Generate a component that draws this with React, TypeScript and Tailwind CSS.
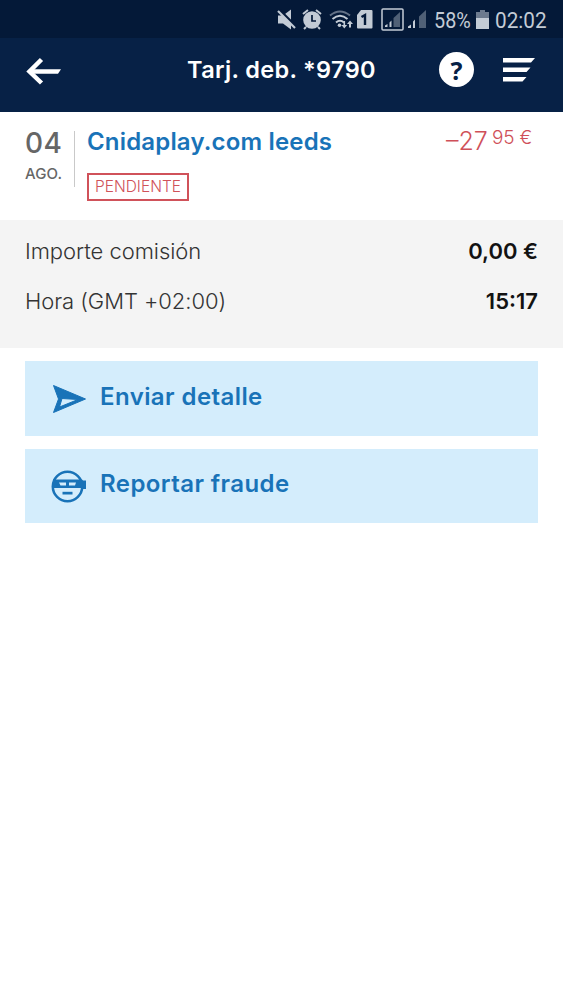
import type { ReactNode } from 'react'

function StatusBar() {
  return (
    <div className="h-[38px] bg-[#041938] pl-[277px] flex items-center text-[#c3cbd5]">
      <svg width="153" height="38" viewBox="277 0 153 38" fill="currentColor" className="shrink-0">
        {/* mute */}
        <path d="M278 15.500h5l8-6v20l-8-6h-5z" />
        <path d="M279.500 10l16 16" stroke="#041938" strokeWidth="2.500" />
        <path d="M278 11l17 17" stroke="currentColor" strokeWidth="2.200" />
        {/* alarm */}
        <circle cx="312" cy="20" r="8.800" />
        <path d="M303 14l5-4M321 14l-5-4M306 27l-2 2M318 27l2 2" stroke="currentColor" strokeWidth="2" />
        <path d="M312 15v6h4" fill="none" stroke="#041938" strokeWidth="1.700" />
        {/* wifi */}
        <g fill="none" stroke="currentColor" strokeWidth="2">
          <path d="M330 15.500q10-8 20 0" opacity=".5" />
          <path d="M332.500 19q7.500-6.500 15 0M336 22.500q4-3.500 8 0" />
        </g>
        <circle cx="339.500" cy="25.200" r="1.800" />
        <path d="M343.500 21v4h-2l2.800 3.500 2.800-3.500h-2v-4zM349 27.500v-3.500h-2l3-3.500 3 3.500h-2v3.500z" />
        {/* sim */}
        <path d="M357 15l4-5h10.500q1 0 1 1v16.500q0 1-1 1H358q-1 0-1-1z" />
        <path d="M361.500 17l3.500-2v10" fill="none" stroke="#041938" strokeWidth="2.400" />
        {/* signal */}
        <rect x="382" y="9" width="21" height="21" rx="1" fill="none" stroke="currentColor" strokeWidth="1.500" />
        <path d="M385 27v-1.500l2.500-1.500v3zM389.500 27v-4.500l2-2v6.500z" />
        <path d="M393.500 27v-9l6.500-6v15z" opacity=".4" />
        <path d="M408 28v-1.500l3-2V28zM413 28v-6.500l2-2V28z" />
        <path d="M419 28V16.500l7-6.500v18z" opacity=".4" />
      </svg>
      <span className="w-[42px] ml-1 mt-[3px] font-['Roboto'] text-[22.500px] leading-none whitespace-nowrap origin-left scale-x-[.88]">58%</span>
      <svg width="13" height="20" viewBox="0 0 13 20" fill="currentColor" className="mt-[2px] shrink-0">
        <path d="M4 0h5v2h4v7H0V2h4z" opacity=".55" />
        <path d="M0 8h13v11H0z" />
      </svg>
      <span className="ml-[6px] mt-[3px] font-['Roboto'] text-[22.500px] leading-none whitespace-nowrap origin-left scale-x-[.92]">02:02</span>
    </div>
  )
}

function Header() {
  return (
    <header className="h-[74px] pt-[2px] bg-[#072146] text-white flex">
      <svg width="36" height="28" viewBox="0 0 36 28" className="ml-[26px] mt-[17px]">
        <path d="M15.500 2.500L3.500 14.500L15.500 26" fill="none" stroke="white" strokeWidth="4.500" />
        <path d="M3 12.300h32l-3 4.400H3z" fill="white" />
      </svg>
      <h1 className="w-[188px] ml-[125px] mt-[14px] text-[23.500px] leading-8 font-semibold tracking-[.35px] whitespace-nowrap">Tarj. deb. *9790</h1>
      <span className="size-[35px] ml-[64px] mt-3 rounded-full bg-white text-[#072146] font-['Noto_Sans'] font-bold text-[25px] leading-[36px] text-center">?</span>
      <svg width="33" height="26" viewBox="0 0 33 26" fill="white" className="ml-[29px] mt-[17px]">
        <path d="M0 1h32l-4 4.500H0zM0 10.500h27.500l-4 4.500H0zM0 20h23.500l-4 4.500H0z" />
      </svg>
    </header>
  )
}

function Transaction() {
  return (
    <section className="h-[108px] flex bg-white">
      <div className="ml-[25px] w-[37px] text-[#666]">
        <div className="mt-[15px] text-[28px] leading-8 font-[550] tracking-[.4px] whitespace-nowrap">04</div>
        <div className="mt-[5px] text-[15px] leading-5 font-medium tracking-[.1px] whitespace-nowrap">AGO.</div>
      </div>
      <div className="ml-3 mt-[19px] h-[56px] w-px bg-[#c9c9c9]" />
      <div className="ml-3 mt-[14px] w-[245px] text-[#1973b8]">
        <h2 className="text-[24px] leading-8 font-semibold tracking-[.17px] whitespace-nowrap">Cnidaplay.com leeds</h2>
        <div className="mt-[15px] w-[102px] h-[28px] border-2 border-[#d0525a] text-center text-[15.500px] leading-[23px] font-light whitespace-nowrap text-[#d0525a]">PENDIENTE</div>
      </div>
      <div className="ml-[114px] mt-[13px] flex text-[#cf5059] font-light whitespace-nowrap">
        <span className="w-[43px] text-[25px] leading-8">–27</span>
        <span className="ml-[3px] mt-px text-[19px] leading-[23px] tracking-[-.2px]">95 €</span>
      </div>
    </section>
  )
}

function DetailRow({ label, value }: { label: string; value: string }) {
  return (
    <div className="flex justify-between h-[50px] text-[22px] leading-8">
      <span className="font-light tracking-[-.05px] text-[#333]">{label}</span>
      <span className="font-semibold text-[#121212]">{value}</span>
    </div>
  )
}

function Action({ icon, label }: { icon: ReactNode; label: string }) {
  return (
    <button className="flex h-[74.500px] w-[513px] bg-[#d4edfc] text-[#1973b8] text-left">
      <span className="ml-[26px] mt-[20px] w-[36px]">{icon}</span>
      <span className="ml-[13px] mt-[19.500px] text-[24px] leading-8 font-semibold tracking-[.42px] whitespace-nowrap">{label}</span>
    </button>
  )
}

export default function App() {
  return (
    <main className="w-[563px] h-[1000px] overflow-hidden bg-white font-['Inter',sans-serif]">
      <StatusBar />
      <Header />
      <Transaction />
      <section className="h-[128px] bg-[#f4f4f4] px-[25px] pt-[15px]">
        <DetailRow label="Importe comisión" value="0,00 €" />
        <DetailRow label="Hora (GMT +02:00)" value="15:17" />
      </section>
      <section className="px-[25px] pt-[13px] flex flex-col gap-[13px]">
        <Action
          label="Enviar detalle"
          icon={
            <svg width="36" height="34" viewBox="0 0 36 34" fill="currentColor" stroke="currentColor" strokeWidth="1" strokeLinejoin="round">
              <path fillRule="evenodd" d="M2.500 4.500L34.500 18L2.500 31.500L7.500 18zM11 17.500L8.500 26L27 18.500z" />
            </svg>
          }
        />
        <Action
          label="Reportar fraude"
          icon={
            <svg width="36" height="36" viewBox="0 0 36 36" fill="currentColor">
              <circle cx="16.500" cy="17.500" r="14.700" fill="none" stroke="currentColor" strokeWidth="2.500" />
              <path fillRule="evenodd" d="M2 10.500h29l1 1h3v8.500h-4l-1-1H2zM8 13.500l1.500 3h5.500v-3zM18 13.500v3h6l1-3z" />
              <path d="M11.500 22.800h10v2.700h-10z" />
            </svg>
          }
        />
      </section>
    </main>
  )
}
